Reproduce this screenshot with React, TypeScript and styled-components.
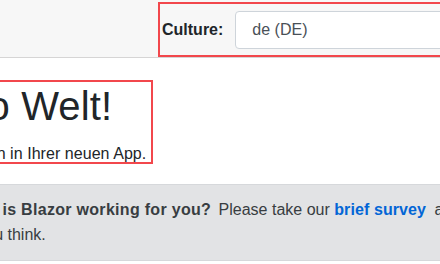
import React from "react";
import styled, { createGlobalStyle } from "styled-components";

const GlobalStyle = createGlobalStyle`
  html, body {
    margin: 0;
    padding: 0;
    background: #fff;
    overflow: hidden;
  }
  body {
    font-family: "Liberation Sans", Arial, sans-serif;
    font-size: 16px;
    line-height: 1.5;
    color: #212529;
  }
`;

const Viewport = styled.div`
  width: 440px;
  height: 264px;
  overflow: hidden;
`;

// main column, scrolled so the sidebar and the left edge sit off screen
const Main = styled.main`
  margin-left: -82px;
  width: 630px;
`;

const TopRow = styled.div`
  display: flex;
  height: 57px;
  background: #f7f7f7;
  border-bottom: 1px solid #d6d5d5;
`;

const CultureBox = styled.div`
  display: flex;
  align-items: center;
  gap: 12px;
  margin: 4px 0 0 242px;
  padding-left: 2px;
  height: 51px;
  flex: 1;
  outline: 2px solid #f2474c;
`;

const Label = styled.label`
  font-weight: 700;
  color: #212529;
`;

const Select = styled.div`
  box-sizing: border-box;
  width: 300px;
  height: 38px;
  padding: 0 16px;
  display: flex;
  align-items: center;
  background: #fff;
  border: 1px solid #ced4da;
  border-radius: 4px;
  color: #495057;
`;

const Content = styled.article`
  padding: 16px 0 0;
`;

const Highlight = styled.div`
  width: fit-content;
  padding-right: 5px;
  outline: 2px solid #f2474c;
`;

const Title = styled.h1`
  margin: 8px 0 0;
  font-size: 40px;
  font-weight: 400;
  line-height: 48px;
  letter-spacing: 0.15px;
  color: #212529;
`;

const Lead = styled.p`
  margin: 16px 0 0;
  line-height: 16px;
  letter-spacing: 0.05px;
`;

const Alert = styled.div`
  margin-top: 22px;
  padding: 12px 20px 13px;
  line-height: 25px;
  background: #e2e3e5;
  border: 1px solid #d6d8db;
  border-radius: 4px;
  color: #383d41;
`;

const Icon = styled.svg`
  width: 16px;
  height: 16px;
  margin-right: 8px;
  vertical-align: -2px;
`;

const Prompt = styled.strong`
  letter-spacing: 0.3px;
  margin-right: 3px;
`;

const Link = styled.a`
  color: #0366d6;
  font-weight: 700;
  letter-spacing: 0.1px;
  text-decoration: none;
`;

const NoWrap = styled.span`
  white-space: nowrap;
  margin-right: 4px;
`;

export default function App() {
  return (
    <Viewport>
      <GlobalStyle />
      <Main>
        <TopRow>
          <CultureBox>
            <Label>Culture:</Label>
            <Select>de (DE)</Select>
          </CultureBox>
        </TopRow>
        <Content>
          <Highlight>
            <Title>Hallo Welt!</Title>
            <Lead>Willkommen in Ihrer neuen App.</Lead>
          </Highlight>
          <Alert role="alert">
            <Icon viewBox="0 0 8 8" fill="currentColor">
              <path d="M6 0L5 1l2 2 1-1-2-2zM4 2L0 6v2h2l4-4-2-2z" />
            </Icon>
            <Prompt>How is Blazor working for you?</Prompt>{" "}
            <NoWrap>
              Please take our <Link href="#">brief survey</Link>
            </NoWrap>{" "}
            and tell us what you think.
          </Alert>
        </Content>
      </Main>
    </Viewport>
  );
}
